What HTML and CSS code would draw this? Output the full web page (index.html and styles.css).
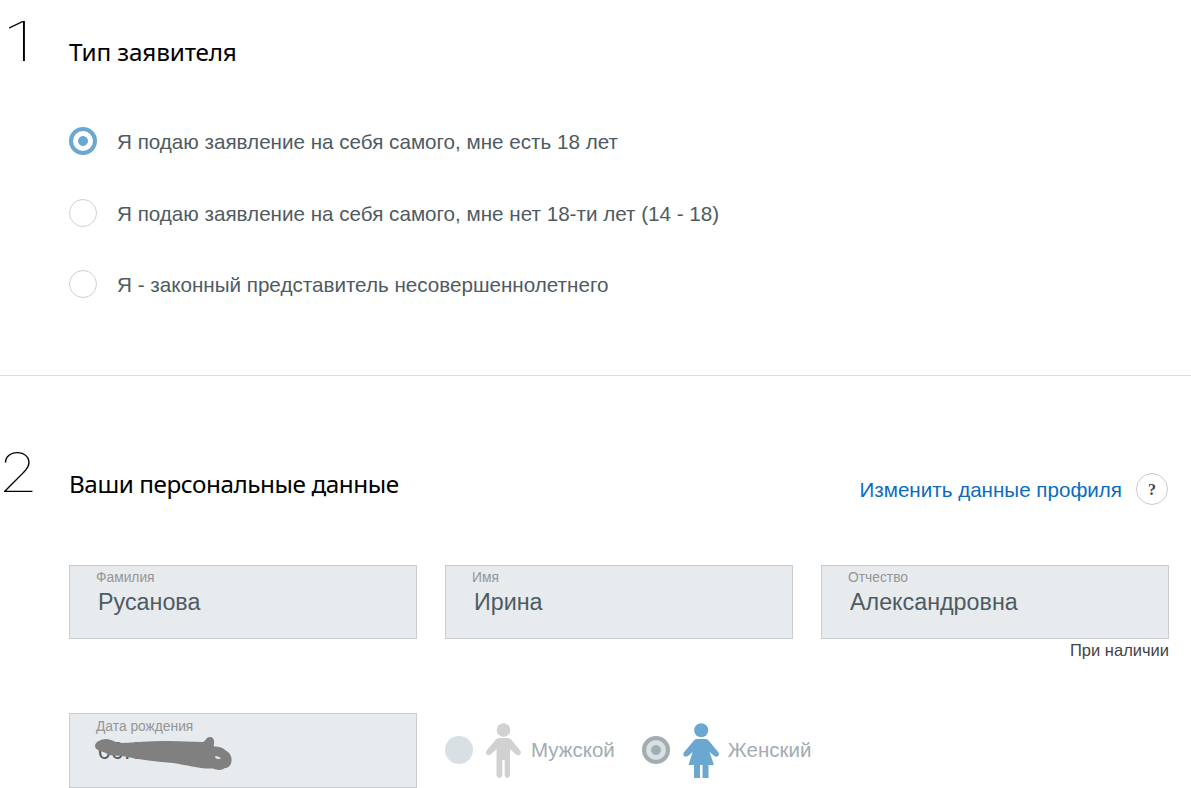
FILE: index.html
```html
<!DOCTYPE html>
<html lang="ru">

<head>
    <meta charset="utf-8">
    <title>Заявление</title>
    <link rel="stylesheet" href="styles.css">
</head>

<body>
<section class="step step-type">
    <div class="step-number"><span class="digit one">1</span></div>
    <div class="step-content">
        <h2 class="title-type">Тип заявителя</h2>
        <div class="options">
            <label class="option"><span class="radio checked"></span><span class="option-text">Я подаю заявление на себя самого, мне есть 18 лет</span></label>
            <label class="option"><span class="radio"></span><span class="option-text">Я подаю заявление на себя самого, мне нет 18-ти лет (14 - 18)</span></label>
            <label class="option"><span class="radio"></span><span class="option-text">Я - законный представитель несовершеннолетнего</span></label>
        </div>
    </div>
</section>

<section class="step step-person">
    <div class="step-number"><span class="digit two">2</span></div>
    <div class="step-content">
        <div class="step-head">
            <h2 class="title-person">Ваши персональные данные</h2>
            <div class="profile">
                <a href="#" class="profile-link">Изменить данные профиля</a>
                <span class="help">?</span>
            </div>
        </div>
        <div class="fields">
            <div class="field">
                <span class="field-label">Фамилия</span>
                <span class="field-value">Русанова</span>
            </div>
            <div class="field">
                <span class="field-label">Имя</span>
                <span class="field-value">Ирина</span>
            </div>
            <div class="field">
                <span class="field-label">Отчество</span>
                <span class="field-value">Александровна</span>
            </div>
        </div>
        <div class="hint">При наличии</div>
        <div class="fields birth-row">
            <div class="field">
                <span class="field-label date-label">Дата рождения</span>
                <span class="field-value">00.00.0000</span>
                <svg class="scribble" width="140" height="36" viewBox="0 0 140 36">
                    <path fill="#808080" fill-rule="evenodd" d="M0 9C0 5 6 2 11 2C17 2 20 6 27 6C42 5 60 3.5 75 4L108 5C111 4 111 0 115 0C119 0 120 4 118.5 9.5C125 9.5 128 11 130 13C135 16 137 19 136.5 24C136 29 133 31 130 31C127 33.5 122 33.5 118 31.5C104 32 92 28 78 26C62 25 48 23 35 20.5C28 18.5 20 19 14 18C9 14 0 14 0 9ZM120 19.5C120 22 124 22.5 126 21.5C125 20 122 18.5 120 19.5Z"/>
                </svg>
            </div>
            <div class="gender">
                <label class="gender-item">
                    <span class="radio disabled"></span>
                    <svg class="person" width="36" height="56" viewBox="0 0 36 56">
                        <g fill="#d1d1d1">
                            <circle cx="17.5" cy="7" r="6.8"/>
                            <path d="M13 15H22C23.5 15 24.5 16 25.5 17L34 27.3C36.5 30.4 32.7 34 29.7 31.2L24 26V51.5C24 56 18.7 56 18.7 51.5V37H16.3V51.5C16.3 56 10.5 56 10.5 51.5V26L5 31.2C2 34 -1.6 30.4 .8 27.3L9.5 17C10.5 16 11.5 15 13 15Z"/>
                        </g>
                    </svg>
                    <span class="gender-text">Мужской</span>
                </label>
                <label class="gender-item">
                    <span class="radio disabled checked"></span>
                    <svg class="person female" width="37" height="56" viewBox="0 0 37 56">
                        <g fill="#6aa7d1">
                            <circle cx="18.2" cy="7.2" r="7"/>
                            <path d="M13.5 16H22.8C24 16 25 16.8 26 18L35.2 29C37.5 31.8 34.5 35.3 31.3 33L26.5 29L31 42H25.5V55H19.5V42H17V55H11V42H5.5L9.7 29L5 33C1.8 35.3 -1.2 31.8 1.2 29L10.5 18C11.5 16.8 12.3 16 13.5 16Z"/>
                        </g>
                    </svg>
                    <span class="gender-text">Женский</span>
                </label>
            </div>
        </div>
    </div>
</section>
</body>

</html>
```
FILE: styles.css
```css
body {
    margin: 0;
    background: #fff;
    color: #4f5b62;
    font-family: "Liberation Sans", Arial, sans-serif;
    overflow: hidden;
}

.step {
    display: flex;
    box-sizing: border-box;
}

.step-type {
    height: 376px;
    padding-top: 12px;
    border-bottom: 1px solid #dcdfe1;
}

.step-person {
    padding-top: 67px;
}

.step-number {
    flex: none;
    width: 69px;
    color: #000;
    font: 100 54px/60px Inter, sans-serif;
}

.digit {
    display: inline-block;
    transform-origin: 0 0;
}

.digit.one {
    margin-left: 3px;
    transform: scaleX(1.6);
}

.digit.two {
    margin-left: -2px;
    transform: scaleX(1.2);
}

.step-content {
    width: 1100px;
}

h2 {
    margin: 0;
    color: #000;
    font: 400 24.3px/34px "Noto Sans", sans-serif;
    white-space: nowrap;
}

.title-type {
    padding-top: 23px;
    letter-spacing: -0.16px;
}

.title-person {
    padding-top: 24px;
    letter-spacing: -0.45px;
}

.options {
    display: flex;
    flex-direction: column;
    gap: 43.5px;
    margin-top: 58px;
}

.option {
    display: flex;
    align-items: center;
    height: 28px;
}

.option-text {
    padding: 2px 0 0 20px;
    font-size: 20.63px;
    line-height: 26px;
    white-space: nowrap;
}

.radio {
    flex: none;
    box-sizing: border-box;
    width: 28px;
    height: 28px;
    border: 1px solid #cdd1d4;
    border-radius: 50%;
}

.radio.checked {
    border: 4px solid #6aa7d1;
    background: radial-gradient(circle, #6aa7d1 4.5px, #fff 5.3px);
}

.radio.disabled {
    border: none;
    background: #d8e0e4;
}

.radio.disabled.checked {
    border: 4px solid #a2acb1;
    background: radial-gradient(circle, #a2acb1 4.5px, #d8e0e4 5.3px);
}

.step-head {
    display: flex;
    justify-content: space-between;
    height: 122px;
}

.profile {
    display: flex;
    align-items: center;
    gap: 14px;
    height: 32px;
    padding: 30px 1px 0 0;
}

.profile-link {
    padding-top: 1px;
    color: #0b6cbf;
    font-size: 20.6px;
    text-decoration: none;
    white-space: nowrap;
}

.help {
    box-sizing: border-box;
    width: 32px;
    height: 32px;
    border: 1px solid #c8ccd0;
    border-radius: 50%;
    color: #444;
    font: bold 16px/32px "Liberation Serif", serif;
    text-align: center;
}

.fields {
    display: flex;
    gap: 28px;
}

.field {
    position: relative;
    display: flex;
    flex-direction: column;
    flex: none;
    box-sizing: border-box;
    width: 348px;
    height: 74px;
    padding: 4px 0 0 26px;
    border: 1px solid #c8ccd0;
    background: #e7ebee;
}

.field-label {
    color: #959595;
    font-size: 13.8px;
    line-height: 15px;
}

.field-value {
    padding: 3px 0 0 2px;
    font-size: 23.3px;
    line-height: 28px;
}

.hint {
    height: 74px;
    color: #444;
    font-size: 16.5px;
    line-height: 23px;
    text-align: right;
}

.birth-row .field {
    height: 75px;
}

.date-label {
    padding-top: 1px;
}

/* marker stroke over the date */
.scribble {
    position: absolute;
    left: 25px;
    top: 23px;
}

.gender {
    display: flex;
    gap: 27px;
    height: 74px;
}

.gender-item {
    display: flex;
    align-items: center;
    color: #a2acb1;
}

.person {
    margin: 1px 9px 0 13px;
}

.person.female {
    margin-right: 8px;
}

.gender-text {
    font-size: 20.5px;
    white-space: nowrap;
}
```
